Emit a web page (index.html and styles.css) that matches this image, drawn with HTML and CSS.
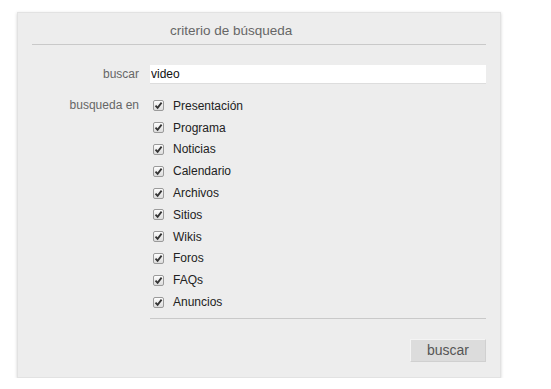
FILE: index.html
```html
<!DOCTYPE html>
<html lang="es">
<head>
    <meta charset="UTF-8">
    <title>Buscar</title>
    <link rel="stylesheet" href="styles.css">
</head>
<body>

    <!-- Search criteria panel -->
    <div class="panel">
        <div class="panel-head">
            <h2>criterio de búsqueda</h2>
        </div>

        <div class="form">
            <label class="form-label" for="q">buscar</label>
            <input class="text-input" type="text" id="q" value="video">

            <div class="form-label label-top">busqueda en</div>
            <ul class="options">
                <li><span class="box"><svg width="11" height="11" viewBox="0 0 11 11"><path d="M2.5 5.6 L4.6 7.8 L8.6 2.6" fill="none" stroke="#333" stroke-width="1.8"/></svg></span>Presentación</li>
                <li><span class="box"><svg width="11" height="11" viewBox="0 0 11 11"><path d="M2.5 5.6 L4.6 7.8 L8.6 2.6" fill="none" stroke="#333" stroke-width="1.8"/></svg></span>Programa</li>
                <li><span class="box"><svg width="11" height="11" viewBox="0 0 11 11"><path d="M2.5 5.6 L4.6 7.8 L8.6 2.6" fill="none" stroke="#333" stroke-width="1.8"/></svg></span>Noticias</li>
                <li><span class="box"><svg width="11" height="11" viewBox="0 0 11 11"><path d="M2.5 5.6 L4.6 7.8 L8.6 2.6" fill="none" stroke="#333" stroke-width="1.8"/></svg></span>Calendario</li>
                <li><span class="box"><svg width="11" height="11" viewBox="0 0 11 11"><path d="M2.5 5.6 L4.6 7.8 L8.6 2.6" fill="none" stroke="#333" stroke-width="1.8"/></svg></span>Archivos</li>
                <li><span class="box"><svg width="11" height="11" viewBox="0 0 11 11"><path d="M2.5 5.6 L4.6 7.8 L8.6 2.6" fill="none" stroke="#333" stroke-width="1.8"/></svg></span>Sitios</li>
                <li><span class="box"><svg width="11" height="11" viewBox="0 0 11 11"><path d="M2.5 5.6 L4.6 7.8 L8.6 2.6" fill="none" stroke="#333" stroke-width="1.8"/></svg></span>Wikis</li>
                <li><span class="box"><svg width="11" height="11" viewBox="0 0 11 11"><path d="M2.5 5.6 L4.6 7.8 L8.6 2.6" fill="none" stroke="#333" stroke-width="1.8"/></svg></span>Foros</li>
                <li><span class="box"><svg width="11" height="11" viewBox="0 0 11 11"><path d="M2.5 5.6 L4.6 7.8 L8.6 2.6" fill="none" stroke="#333" stroke-width="1.8"/></svg></span>FAQs</li>
                <li><span class="box"><svg width="11" height="11" viewBox="0 0 11 11"><path d="M2.5 5.6 L4.6 7.8 L8.6 2.6" fill="none" stroke="#333" stroke-width="1.8"/></svg></span>Anuncios</li>
            </ul>

            <div class="actions">
                <button type="button">buscar</button>
            </div>
        </div>
    </div>

</body>
</html>
```

FILE: styles.css
```css
/* Page */
body {
    margin: 0;
    padding: 0;
    background: #fff;
    font-family: 'Liberation Sans', Arial, sans-serif;
    color: #222;
}

/* Panel box */
.panel {
    box-sizing: border-box;
    width: 484px;
    height: 366px;
    margin: 12px 0 0 17px;
    background: #ededed;
    border: 1px solid #e2e2e2;
    box-shadow: 0 1px 3px rgba(0, 0, 0, 0.18);
}

.panel-head {
    margin: 0 14px;
    padding: 8px 0 3px;
    border-bottom: 1px solid #c9c9c9;
}

.panel-head h2 {
    margin: 0 0 0 138px;
    font-size: 13.5px;
    font-weight: normal;
    line-height: 20px;
    color: #666;
}

/* Form grid */
.form {
    display: grid;
    grid-template-columns: 118px 336px;
    margin: 20px 0 0 14px;
}

.form-label {
    padding-right: 11px;
    text-align: right;
    font-size: 12px;
    color: #666;
    line-height: 19px;
}

.label-top {
    margin-top: 11px;
    line-height: 21.8px;
}

.text-input {
    box-sizing: border-box;
    height: 19px;
    margin: 0;
    padding: 0 1px;
    border: none;
    border-bottom: 1px solid #ddd;
    background: #fff;
    font-family: inherit;
    font-size: 12px;
    color: #111;
}

/* Checkbox list */
.options {
    list-style: none;
    margin: 11px 0 0;
    padding: 0 0 5px;
    border-bottom: 1px solid #c9c9c9;
}

.options li {
    display: flex;
    align-items: center;
    height: 21.8px;
    font-size: 12px;
}

.box {
    display: flex;
    width: 11px;
    height: 11px;
    margin: 0 9px 0 3px;
    box-sizing: border-box;
    border: 1px solid #9a9a9a;
    border-radius: 2px;
    background: linear-gradient(#fdfdfd, #dcdcdc);
    align-items: center;
    justify-content: center;
}

.box svg {
    flex: none;
}

/* Button row */
.actions {
    grid-column: 2;
    display: flex;
    justify-content: flex-end;
    padding-top: 20px;
}

button {
    width: 76px;
    height: 23px;
    padding: 0;
    background: #dcdcdc;
    border: 1px solid #d0d0d0;
    border-top-color: #f4f4f4;
    border-left-color: #f4f4f4;
    font-family: inherit;
    font-size: 14px;
    color: #555;
    cursor: pointer;
}
```
